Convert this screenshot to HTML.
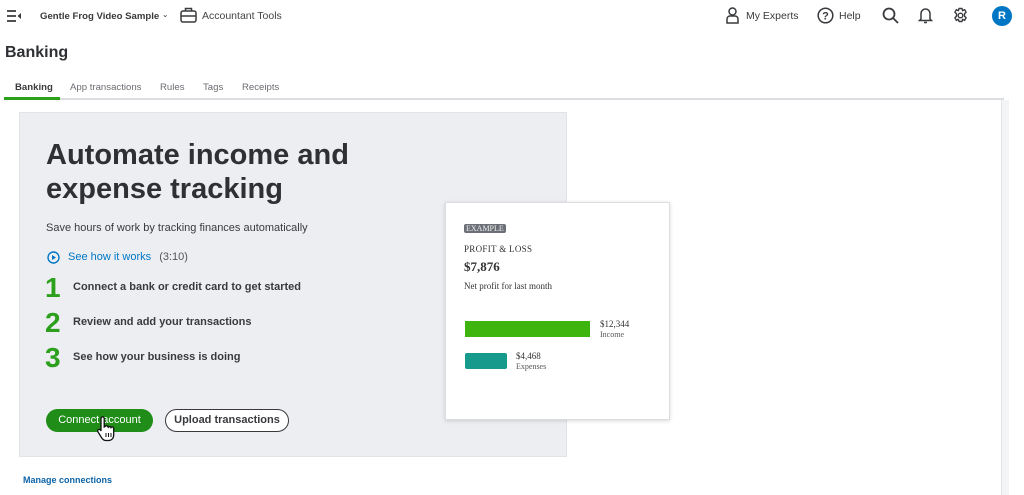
<!DOCTYPE html>
<html><head><meta charset="utf-8"><style>
*{box-sizing:border-box;margin:0;padding:0}
body{width:1024px;height:495px;overflow:hidden;background:#fff;font-family:"Liberation Sans",sans-serif;color:#393a3d;position:relative}
.a{position:absolute;white-space:nowrap}
.serif{font-family:"Liberation Serif",serif;color:#333}
</style></head><body>
<svg class="a" style="left:6px;top:9px" width="16" height="14" viewBox="0 0 16 14"><path d="M1 2h9M1 7h9M1 12h9" stroke="#393a3d" stroke-width="1.8"/><path d="M15 4v6l-3.5-3z" fill="#393a3d"/></svg>
<div class="a" style="left:40px;top:11px;font-size:9.6px;font-weight:bold">Gentle Frog Video Sample <span style="font-weight:normal;font-size:8px;position:relative;top:-2px">&#8964;</span></div>
<svg class="a" style="left:180px;top:7px" width="17" height="16" viewBox="0 0 17 16"><rect x="1" y="4" width="15" height="11" rx="2" fill="none" stroke="#393a3d" stroke-width="1.5"/><path d="M5.5 4V1.5h6V4M1 9h15" stroke="#393a3d" stroke-width="1.5" fill="none"/></svg>
<div class="a" style="left:202px;top:10px;font-size:10.5px;color:#444">Accountant Tools</div>
<svg class="a" style="left:726px;top:7px" width="13" height="17" viewBox="0 0 13 17"><circle cx="6.5" cy="4.5" r="3.5" fill="none" stroke="#393a3d" stroke-width="1.5"/><path d="M1 16v-4a3 3 0 0 1 3-3h5a3 3 0 0 1 3 3v4z" fill="none" stroke="#393a3d" stroke-width="1.5"/></svg>
<div class="a" style="left:746px;top:10px;font-size:10.5px">My Experts</div>
<svg class="a" style="left:817px;top:7px" width="17" height="17" viewBox="0 0 17 17"><circle cx="8.5" cy="8.5" r="7.3" fill="none" stroke="#393a3d" stroke-width="1.5"/><text x="8.5" y="12.5" font-size="11" text-anchor="middle" font-family="Liberation Sans" font-weight="bold" fill="#393a3d">?</text></svg>
<div class="a" style="left:839px;top:10px;font-size:10.5px">Help</div>
<svg class="a" style="left:882px;top:7px" width="17" height="17" viewBox="0 0 17 17"><circle cx="7" cy="7" r="5.5" fill="none" stroke="#393a3d" stroke-width="1.8"/><path d="M11 11l5 5" stroke="#393a3d" stroke-width="1.8"/></svg>
<svg class="a" style="left:918px;top:6px" width="15" height="18" viewBox="0 0 15 18"><path d="M3 13V7.5a4.5 4.5 0 0 1 9 0V13l1.5 1.5h-12z" fill="none" stroke="#393a3d" stroke-width="1.5"/><path d="M6 16.5h3" stroke="#393a3d" stroke-width="1.5"/></svg>
<svg class="a" style="left:952px;top:7px" width="17" height="17" viewBox="0 0 17 17"><path d="M7 1.5h3l.6 2.2 2-1.1 1.5 2.6-1.6 1.6v2.4l1.6 1.6-1.5 2.6-2-1.1-.6 2.2H7l-.6-2.2-2 1.1-1.5-2.6 1.6-1.6V6.8L2.9 5.2l1.5-2.6 2 1.1z" fill="none" stroke="#393a3d" stroke-width="1.4" stroke-linejoin="round"/><circle cx="8.5" cy="8.5" r="2.3" fill="none" stroke="#393a3d" stroke-width="1.4"/></svg>
<div class="a" style="left:992px;top:6px;width:20px;height:20px;border-radius:50%;background:#0077c5;color:#fff;font-size:11px;font-weight:bold;text-align:center;line-height:20px">R</div>
<div class="a" style="left:5px;top:44px;font-size:16px;font-weight:bold;color:#2f3033">Banking</div>
<div class="a" style="left:15px;top:82px;font-size:9.6px;font-weight:bold">Banking</div>
<div class="a" style="left:70px;top:82px;font-size:9.6px;color:#6b6c72">App transactions</div>
<div class="a" style="left:160px;top:82px;font-size:9.6px;color:#6b6c72">Rules</div>
<div class="a" style="left:203px;top:82px;font-size:9.6px;color:#6b6c72">Tags</div>
<div class="a" style="left:242px;top:82px;font-size:9.6px;color:#6b6c72">Receipts</div>
<div class="a" style="left:4px;top:98px;width:1000px;height:2px;background:#dcdde0"></div>
<div class="a" style="left:4px;top:97px;width:56px;height:3px;background:#2ca01c"></div>
<div class="a" style="left:1001px;top:100px;width:8px;height:395px;background:#f3f4f6;border-left:1px solid #e4e5e8"></div>
<div class="a" style="left:19px;top:112px;width:548px;height:345px;background:#eceef2;border:1px solid #e1e3e7"></div>
<div class="a" style="left:46px;top:138px;font-size:29px;font-weight:bold;line-height:34px;color:#2f3033">Automate income and<br>expense tracking</div>
<div class="a" style="left:46px;top:222px;font-size:11px">Save hours of work by tracking finances automatically</div>
<svg class="a" style="left:47px;top:251px" width="13" height="13" viewBox="0 0 13 13"><circle cx="6.5" cy="6.5" r="5.5" fill="none" stroke="#0077c5" stroke-width="1.4"/><path d="M5 4v5l4-2.5z" fill="#0077c5"/></svg>
<div class="a" style="left:68px;top:251px;font-size:11px;color:#0077c5">See how it works <span style="color:#555;margin-left:5px">(3:10)</span></div>
<div class="a" style="left:45px;top:272px;font-size:28px;font-weight:bold;color:#2ca01c">1</div>
<div class="a" style="left:73px;top:281px;font-size:11px;font-weight:bold">Connect a bank or credit card to get started</div>
<div class="a" style="left:45px;top:307px;font-size:28px;font-weight:bold;color:#2ca01c">2</div>
<div class="a" style="left:73px;top:316px;font-size:11px;font-weight:bold">Review and add your transactions</div>
<div class="a" style="left:45px;top:342px;font-size:28px;font-weight:bold;color:#2ca01c">3</div>
<div class="a" style="left:73px;top:351px;font-size:11px;font-weight:bold">See how your business is doing</div>
<div class="a" style="left:46px;top:409px;width:107px;height:23px;border-radius:12px;background:#1f8d17;color:#fff;font-size:11px;text-align:center;line-height:23px">Connect account</div>
<svg class="a" style="left:96px;top:416px" width="22" height="26" viewBox="0 0 22 26"><path d="M5 2.5a1.6 1.6 0 0 1 3.2 0V11l1-.5a1.5 1.5 0 0 1 2.8.5l.3.3a1.5 1.5 0 0 1 2.7.3 1.5 1.5 0 0 1 2.7.5V19c0 3-2 5.5-5 5.5H10c-2 0-3.2-1-4.2-2.5L2 16a1.6 1.6 0 0 1 2.5-2L5 15z" fill="#fff" stroke="#111" stroke-width="1.3"/><path d="M10 17v4M12.5 17v4M15 17v4" stroke="#111" stroke-width="1"/></svg>
<div class="a" style="left:165px;top:409px;width:124px;height:23px;border-radius:12px;border:1.5px solid #393a3d;font-size:11px;font-weight:bold;text-align:center;line-height:20px;background:#fff">Upload transactions</div>
<div class="a" style="left:23px;top:475px;font-size:9px;font-weight:bold;color:#0d64a8">Manage connections</div>
<div class="a" style="left:445px;top:202px;width:225px;height:218px;background:#fff;border:1px solid #dcdde0;box-shadow:0 1px 4px rgba(0,0,0,.15)"></div>
<div class="a serif" style="left:464px;top:224px;height:9px;padding:0 2px;border-radius:2px;background:#6c6f76;color:#eee;font-size:8px;line-height:9px">EXAMPLE</div>
<div class="a serif" style="left:464px;top:244px;font-size:9px;letter-spacing:.3px">PROFIT &amp; LOSS</div>
<div class="a serif" style="left:464px;top:259px;font-size:13px;font-weight:bold">$7,876</div>
<div class="a serif" style="left:464px;top:281px;font-size:9px">Net profit for last month</div>
<div class="a" style="left:465px;top:321px;width:125px;height:16px;background:#3db50e"></div>
<div class="a serif" style="left:600px;top:319px;font-size:9px;line-height:10px">$12,344<br><span style="font-size:8px;color:#555">Income</span></div>
<div class="a" style="left:465px;top:353px;width:42px;height:16px;border-radius:2px;background:#159a8c"></div>
<div class="a serif" style="left:516px;top:351px;font-size:9px;line-height:10px">$4,468<br><span style="font-size:8px;color:#555">Expenses</span></div>
</body></html>
